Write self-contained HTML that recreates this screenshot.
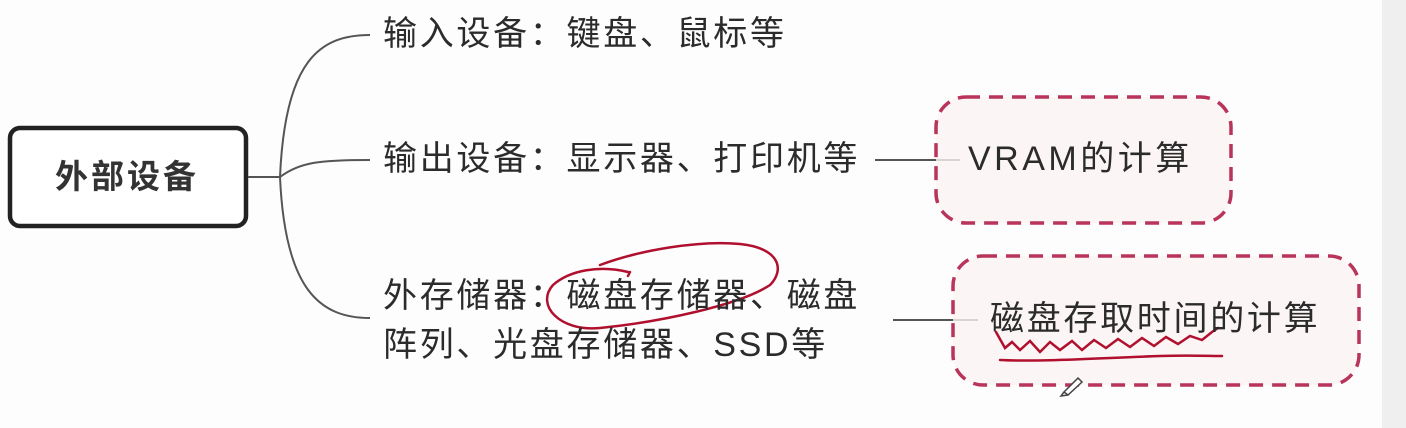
<!DOCTYPE html>
<html><head><meta charset="utf-8"><style>
html,body{margin:0;padding:0;background:#fdfdfd;}
body{width:1406px;height:428px;overflow:hidden;position:relative;font-family:"Liberation Sans","Noto Sans CJK SC",sans-serif;color:#2b2b2b;}
.t{position:absolute;font-size:34px;letter-spacing:2.7px;line-height:47px;white-space:nowrap;}
</style></head><body>
<div style="position:absolute;left:1382px;top:0;width:24px;height:428px;background:#efefef"></div>
<svg width="1406" height="428" style="position:absolute;left:0;top:0">
<rect x="10" y="128" width="236" height="98" rx="10" fill="#fff" stroke="#222" stroke-width="4.5"/>
<g fill="none" stroke="#555" stroke-width="2">
<path d="M248 177 H280"/>
<path d="M280 177 C285 60 320 35 370 35"/>
<path d="M280 177 C300 162 320 160 370 160"/>
<path d="M280 177 C285 290 320 318 370 318"/>
<path d="M875 160 H960"/>
<path d="M893 320 H978"/>
</g>
<rect x="936" y="97" width="295" height="126" rx="30" fill="#fbf2f3" fill-opacity="0.8" stroke="#b8345a" stroke-width="3.5" stroke-dasharray="14 9"/>
<rect x="953" y="256" width="406" height="129" rx="30" fill="#fbf2f3" fill-opacity="0.8" stroke="#b8345a" stroke-width="3.5" stroke-dasharray="14 9"/>
<g fill="none" stroke="#b0102e" stroke-width="2.5" stroke-linecap="round">
<path d="M628 272 C600 265 570 270 553 285 C535 305 560 332 600 328 C660 322 740 305 770 285 C785 270 780 248 740 244 C700 240 640 250 600 265"/>
<path d="M630 272 L628 276"/>
<path d="M996 332 L1005 348 L1012 342 L1020 350 L1030 341 L1040 352 L1050 342 L1060 350 L1072 341 L1082 350 L1094 340 L1106 348 L1118 339 L1130 347 L1142 338 L1154 346 L1166 337 L1178 344 L1190 336 L1202 340 L1212 332 L1218 328"/>
<path d="M1000 360 C1040 362 1100 358 1160 356 C1190 355 1210 356 1222 356"/>
</g>
<path d="M1064 392 L1078 378 L1082 382 L1068 395 Z M1064 392 L1061 396 L1068 395" fill="#fff" stroke="#444" stroke-width="1.5"/>
</svg>
<div class="t" style="left:55px;top:153px;font-size:33px;font-weight:bold;letter-spacing:3px;color:#333">外部设备</div>
<div class="t" style="left:383px;top:11px">输入设备：键盘、鼠标等</div>
<div class="t" style="left:383px;top:136px">输出设备：显示器、打印机等</div>
<div class="t" style="left:383px;top:273px">外存储器：磁盘存储器、磁盘</div>
<div class="t" style="left:383px;top:322px">阵列、光盘存储器、SSD等</div>
<div class="t" style="left:968px;top:136px;letter-spacing:3.5px">VRAM的计算</div>
<div class="t" style="left:990px;top:296px">磁盘存取时间的计算</div>
</body></html>
